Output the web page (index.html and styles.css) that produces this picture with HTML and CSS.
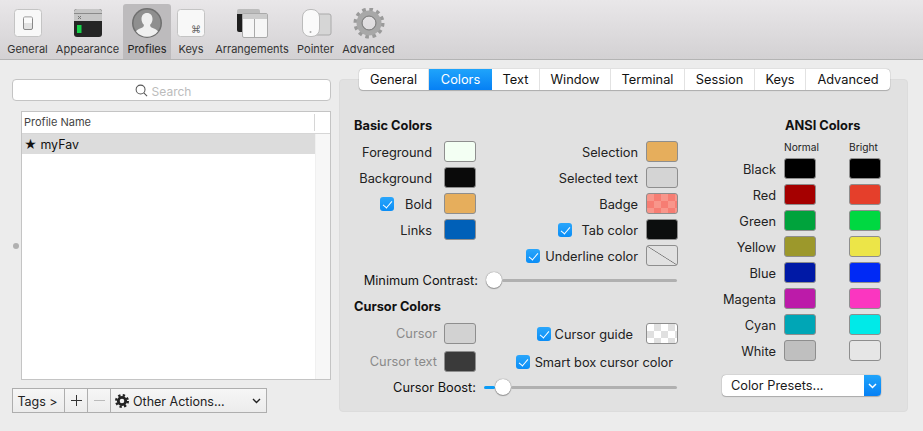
FILE: index.html
```html
<!DOCTYPE html>
<html lang="en">

<head>
    <meta charset="UTF-8">
    <meta name="viewport" content="width=device-width, initial-scale=1.0">
    <title>Preferences</title>
    <link rel="stylesheet" href="styles.css">
</head>

<body>

    <div class="toolbar">
        <div class="tool">
            <svg class="tool-icon" viewBox="0 0 32 32">
                <rect x="2.5" y="1.5" width="27" height="27" rx="3" fill="#f8f8f8" stroke="#c4c4c4"/>
                <rect x="11.5" y="9" width="9" height="12.5" rx="1.5" fill="#e2e2e2" stroke="#888"/>
                <rect x="12" y="9.5" width="8" height="5.5" fill="#fafafa"/>
            </svg>
            <span>General</span>
        </div>
        <div class="tool">
            <svg class="tool-icon" viewBox="0 0 32 32">
                <rect x="2" y="1" width="28" height="28" rx="3" fill="#252525"/>
                <path d="M2 13V4a3 3 0 0 1 3-3h22a3 3 0 0 1 3 3v9z" fill="#c6c6c6"/>
                <rect x="2" y="5" width="28" height="1" fill="#8a8a8a"/>
                <path d="M6 8l3 3M9 8l-3 3" stroke="#777" fill="none"/>
                <rect x="5" y="17" width="4.5" height="8" fill="#17d14a"/>
            </svg>
            <span>Appearance</span>
        </div>
        <div class="tool tool-active">
            <svg class="tool-icon" viewBox="0 0 32 32">
                <circle cx="16" cy="15" r="15" fill="#6f6f6f"/>
                <circle cx="16" cy="15" r="13.5" fill="#8f8f8f"/>
                <path d="M16 5c-3.5 0-5.5 2.6-5.5 6 0 2.4 1 4.5 2.4 5.800 0 1.500-.4 2.300-2 3-2.600 1.100-4.800 1.900-5.900 3.400a13.500 13.500 0 0 0 22 0c-1.100-1.500-3.300-2.300-5.900-3.400-1.600-.7-2-1.500-2-3 1.400-1.300 2.400-3.400 2.400-5.800 0-3.400-2-6-5.500-6z" fill="#efefef"/>
            </svg>
            <span>Profiles</span>
        </div>
        <div class="tool">
            <svg class="tool-icon" viewBox="0 0 32 32">
                <rect x="2.5" y="1.5" width="27" height="27" rx="3" fill="#f8f8f8" stroke="#c4c4c4"/>
                <text class="cmd-glyph" x="21" y="25" text-anchor="middle">⌘</text>
            </svg>
            <span>Keys</span>
        </div>
        <div class="tool">
            <svg class="tool-icon" viewBox="0 0 32 32">
                <path d="M1 3a2 2 0 0 1 2-2h19a2 2 0 0 1 2 2v4H1z" fill="#bcbcbc"/>
                <path d="M1 6h8v18H3a2 2 0 0 1-2-2z" fill="#1e1e1e"/>
                <rect x="6.5" y="5.5" width="25" height="24" rx="1.5" fill="#f6f6f6" stroke="#aaa"/>
                <rect x="7" y="6" width="24" height="5" fill="#cccccc"/>
                <path d="M18.5 11v18" stroke="#aaa"/>
            </svg>
            <span>Arrangements</span>
        </div>
        <div class="tool">
            <svg class="tool-icon" viewBox="0 0 32 32">
                <rect x="15" y="6" width="16" height="21" rx="2" fill="#d6d6d6" stroke="#aaa"/>
                <rect x="2.5" y="1.5" width="17" height="27" rx="7.5" fill="#fafafa" stroke="#bbb"/>
                <circle cx="10.5" cy="24" r="1" fill="#aaa"/>
            </svg>
            <span>Pointer</span>
        </div>
        <div class="tool tool-last">
            <svg class="tool-icon" viewBox="0 0 32 32">
                <circle cx="16" cy="15" r="13.5" fill="none" stroke="#9a9a9a" stroke-width="4" stroke-dasharray="3.53 3.53"/>
                <circle cx="16" cy="15" r="9.5" fill="none" stroke="#a8a8a8" stroke-width="6"/>
                <circle cx="16" cy="15" r="7" fill="none" stroke="#7c7c7c"/>
            </svg>
            <span>Advanced</span>
        </div>
    </div>

    <div class="main">

        <div class="profiles">
            <div class="search">
                <svg class="search-icon" viewBox="0 0 14 14">
                    <circle cx="6" cy="6" r="4.8" fill="none" stroke="#555" stroke-width="1.1"/>
                    <path d="M9.5 9.5l3.5 3.5" stroke="#555" stroke-width="1.2"/>
                </svg>
                <span class="search-text">Search</span>
            </div>

            <div class="list-row">
                <div class="split-handle"></div>
                <div class="list">
                    <div class="list-head">
                        <span class="list-head-name">Profile Name</span>
                        <span class="list-head-end"></span>
                    </div>
                    <div class="list-body">
                        <div class="list-rows">
                            <div class="list-item">★ myFav</div>
                        </div>
                        <div class="list-gutter"></div>
                    </div>
                </div>
            </div>

            <div class="actions">
                <div class="action action-tags">Tags &gt;</div>
                <div class="action action-sign">
                    <svg width="11" height="11" viewBox="0 0 11 11"><path d="M5.5 0v11M0 5.5h11" stroke="#333"/></svg>
                </div>
                <div class="action action-sign">
                    <svg width="11" height="11" viewBox="0 0 11 11"><path d="M0 5.5h11" stroke="#bbb"/></svg>
                </div>
                <div class="action action-other">
                    <svg width="14" height="14" viewBox="0 0 14 14">
                        <circle cx="7" cy="7" r="5.8" fill="none" stroke="#222" stroke-width="2.4" stroke-dasharray="2.28 2.28"/>
                        <circle cx="7" cy="7" r="3.7" fill="none" stroke="#222" stroke-width="2.8"/>
                    </svg>
                    <span class="action-label">Other Actions...</span>
                    <svg width="9" height="6" viewBox="0 0 9 6"><path d="M1 1l3.5 3.5L8 1" fill="none" stroke="#222" stroke-width="1.4"/></svg>
                </div>
            </div>
        </div>

        <div class="panel">
            <div class="tabs">
                <div class="tab">General</div>
                <div class="tab tab-active">Colors</div>
                <div class="tab">Text</div>
                <div class="tab">Window</div>
                <div class="tab">Terminal</div>
                <div class="tab">Session</div>
                <div class="tab">Keys</div>
                <div class="tab">Advanced</div>
            </div>

            <div class="panel-body">
                <div class="basic">
                    <h3 class="heading">Basic Colors</h3>
                    <div class="pairs">
                        <div class="pair"><span>Foreground</span><i class="swatch c-foreground"></i></div>
                        <div class="pair pair-right"><span>Selection</span><i class="swatch c-gold"></i></div>
                        <div class="pair"><span>Background</span><i class="swatch c-background"></i></div>
                        <div class="pair pair-right"><span>Selected text</span><i class="swatch c-seltext"></i></div>
                        <div class="pair">
                            <b class="check check-bold"></b><span>Bold</span><i class="swatch c-gold"></i>
                        </div>
                        <div class="pair pair-right"><span>Badge</span><i class="swatch c-badge"></i></div>
                        <div class="pair"><span>Links</span><i class="swatch c-links"></i></div>
                        <div class="pair pair-right">
                            <b class="check check-tab"></b><span>Tab color</span><i class="swatch c-tab"></i>
                        </div>
                        <div class="pair"></div>
                        <div class="pair pair-right">
                            <b class="check check-near"></b><span>Underline color</span><i class="swatch c-none"></i>
                        </div>
                    </div>

                    <div class="slider-row slider-contrast">
                        <span class="slider-label">Minimum Contrast:</span>
                        <div class="slider"><div class="thumb"></div><div class="track"></div></div>
                    </div>

                    <h3 class="heading heading-cursor">Cursor Colors</h3>
                    <div class="pairs pairs-cursor">
                        <div class="pair pair-dim"><span>Cursor</span><i class="swatch c-cursor"></i></div>
                        <div class="pair pair-right pair-guide">
                            <b class="check check-guide"></b><span>Cursor guide</span><i class="swatch c-guide"></i>
                        </div>
                        <div class="pair pair-dim"><span>Cursor text</span><i class="swatch c-cursortext"></i></div>
                        <div class="pair pair-right pair-smart">
                            <b class="check check-near"></b><span>Smart box cursor color</span>
                        </div>
                    </div>

                    <div class="slider-row slider-boost">
                        <span class="slider-label">Cursor Boost:</span>
                        <div class="slider">
                            <div class="track track-on"></div><div class="thumb"></div><div class="track"></div>
                        </div>
                    </div>
                </div>

                <div class="ansi">
                    <h3 class="heading ansi-heading">ANSI Colors</h3>
                    <div class="ansi-grid">
                        <span></span><small>Normal</small><small>Bright</small>
                        <span>Black</span><i class="swatch a-black"></i><i class="swatch a-black"></i>
                        <span>Red</span><i class="swatch a-red"></i><i class="swatch a-red2"></i>
                        <span>Green</span><i class="swatch a-green"></i><i class="swatch a-green2"></i>
                        <span>Yellow</span><i class="swatch a-yellow"></i><i class="swatch a-yellow2"></i>
                        <span>Blue</span><i class="swatch a-blue"></i><i class="swatch a-blue2"></i>
                        <span>Magenta</span><i class="swatch a-magenta"></i><i class="swatch a-magenta2"></i>
                        <span>Cyan</span><i class="swatch a-cyan"></i><i class="swatch a-cyan2"></i>
                        <span>White</span><i class="swatch a-white"></i><i class="swatch a-white2"></i>
                    </div>
                    <div class="presets">
                        <span class="presets-label">Color Presets...</span>
                        <span class="presets-arrow">
                            <svg width="9" height="6" viewBox="0 0 9 6"><path d="M1 1l3.5 3.5L8 1" fill="none" stroke="#fff" stroke-width="1.5"/></svg>
                        </span>
                    </div>
                </div>
            </div>
        </div>

    </div>

</body>

</html>
```
FILE: styles.css
```css
* {
    box-sizing: border-box;
}

body {
    font-family: 'Inter', 'Liberation Sans', sans-serif;
    font-size: 12.8px;
    color: #1a1a1a;
    background-color: #ececec;
    margin: 0;
    padding: 0;
    height: 431px;
    overflow: hidden;
}

/* toolbar */
.toolbar {
    display: grid;
    grid-template-columns: 49px 71px 48px 40px 82px 45px 59px;
    height: 60px;
    padding: 4px 0 0 3px;
    background: linear-gradient(#e9e7e9, #d3d1d3);
    border-bottom: 1px solid #b4b4b4;
}

.tool {
    display: flex;
    flex-direction: column;
    align-items: center;
    padding-top: 4px;
    font-size: 11px;
    color: #333;
    white-space: nowrap;
}

.tool-active {
    background-color: #bdbbbd;
    border-radius: 3px 3px 0 0;
    color: #222;
}

.tool-last {
    padding-left: 2px;
}

.tool-icon {
    width: 32px;
    height: 32px;
    margin-bottom: 2px;
}

.cmd-glyph {
    font-family: 'DejaVu Sans', sans-serif;
    font-size: 10px;
    fill: #666;
}

/* main area */
.main {
    display: flex;
    gap: 8px;
    padding: 19px 0 0 12px;
}

.profiles {
    width: 319px;
}

.search {
    display: flex;
    align-items: center;
    justify-content: center;
    gap: 4px;
    height: 22px;
    padding-right: 17px;
    background-color: #fff;
    border: 1px solid #c4c4c4;
    border-radius: 4px;
    font-size: 12px;
    color: #bcbcbc;
}

.search-icon {
    width: 13px;
    height: 13px;
}

.search-text {
    padding-top: 2px;
}

.list-row {
    display: flex;
    align-items: center;
    margin-top: 10px;
}

.split-handle {
    width: 6px;
    height: 6px;
    margin: 0 2px 0 1px;
    background-color: #b0b0b0;
    border-radius: 50%;
}

.list {
    flex: 1;
    height: 269px;
    display: flex;
    flex-direction: column;
    background-color: #fff;
    border: 1px solid #c4c4c4;
}

.list-head {
    display: flex;
    height: 22px;
    flex-shrink: 0;
    border-bottom: 1px solid #d6d6d6;
    font-size: 11px;
    color: #444;
}

.list-head-name {
    flex: 1;
    padding: 2px 0 0 2px;
    line-height: 17px;
}

.list-head-end {
    width: 16px;
    margin: 2px 0;
    border-left: 1px solid #d6d6d6;
}

.list-body {
    flex: 1;
    display: flex;
}

.list-rows {
    flex: 1;
}

.list-gutter {
    width: 15px;
    background-color: #f7f7f7;
    border-left: 1px solid #f0f0f0;
}

.list-item {
    height: 20px;
    padding-left: 2px;
    line-height: 22px;
    font-size: 12.4px;
    background-color: #dcdcdc;
    color: #111;
}

.actions {
    display: flex;
    width: 255px;
    height: 25px;
    margin-top: 8px;
    background: linear-gradient(#f6f6f6, #ececec);
    border: 1px solid #aeaeae;
    font-size: 12.5px;
}

.action {
    display: flex;
    align-items: center;
    justify-content: center;
    border-right: 1px solid #aeaeae;
    color: #222;
}

.action-tags {
    width: 52px;
    padding: 2px 2px 0 0;
}

.action-sign {
    width: 23px;
}

.action-other {
    flex: 1;
    justify-content: flex-start;
    gap: 4px;
    padding: 0 5px 0 4px;
    border-right: 0;
}

.action-label {
    flex: 1;
    padding-top: 2px;
    white-space: nowrap;
}

/* colors panel */
.panel {
    width: 569px;
    height: 333px;
    background-color: #e1e1e1;
    border: 1px solid #dcdcdc;
    border-radius: 4px;
}

.tabs {
    display: grid;
    grid-template-columns: 70px 63px 48px 71px 74px 70px 51px 84px;
    width: 531px;
    height: 21px;
    margin: -11px 0 0 19px;
    background-color: #fff;
    border-radius: 4px;
    box-shadow: 0 0 1px rgba(0, 0, 0, 0.45), 0 1px 1px rgba(0, 0, 0, 0.2);
    overflow: hidden;
}

.tab {
    text-align: center;
    line-height: 21px;
    color: #111;
    border-right: 1px solid #e2e2e2;
}

.tab:last-child {
    border-right: 0;
}

.tab-active {
    color: #fff;
    border-right: 0;
    background: linear-gradient(#1fa4fb, #0680f4);
}

.panel-body {
    display: flex;
    padding: 25px 26px 0 14px;
}

.heading {
    margin: 0;
    height: 20px;
    line-height: 22px;
    font-size: 12.8px;
    font-weight: 700;
    color: #111;
}

.basic {
    width: 324px;
}

.pairs {
    display: grid;
    grid-template-columns: 122px 202px;
    row-gap: 5px;
    margin-top: 6px;
}

.pair {
    display: flex;
    align-items: center;
    justify-content: flex-end;
    height: 21px;
    gap: 12px;
    white-space: nowrap;
    color: #222;
}

.pair span {
    padding-top: 2px;
}

.pair-right {
    gap: 8px;
}

.pair-dim {
    gap: 7px;
    color: #8a8a8a;
}

.pair-dim span {
    padding-top: 0;
}

.pair-guide {
    gap: 13px;
}

.pair-smart {
    padding-right: 5px;
}

.pairs-cursor {
    row-gap: 7px;
    margin-top: 7px;
}

.swatch {
    display: block;
    width: 32px;
    height: 21px;
    border: 1px solid #8e8e8e;
    border-radius: 3px;
    flex-shrink: 0;
}

.check {
    position: relative;
    display: block;
    width: 14px;
    height: 14px;
    background: linear-gradient(#2aa6fb, #0a8df6);
    border-radius: 3px;
    flex-shrink: 0;
}

.check::after {
    content: "";
    position: absolute;
    left: 5px;
    top: 2px;
    width: 4px;
    height: 8px;
    border: solid #fff;
    border-width: 0 1.6px 1.6px 0;
    transform: rotate(40deg);
}

.check-bold {
    margin-right: -1px;
}

.check-tab {
    margin-right: 1px;
}

.check-near {
    margin-right: -3px;
}

.check-guide {
    margin-right: -9px;
}

.c-foreground { background-color: #f3fff3; }
.c-background { background-color: #0a0a0a; }
.c-gold { background-color: #e6ae5c; }
.c-links { background-color: #0060b8; }
.c-seltext { background-color: #d4d4d4; }
.c-tab { background-color: #0c0e0e; }
.c-cursor { background-color: #d2d2d2; }
.c-cursortext { background-color: #3a3a3a; }

.c-badge {
    background-color: #f8968b;
    background-image: conic-gradient(#f67d73 25%, transparent 0 50%, #f67d73 0 75%, transparent 0);
    background-size: 14px 14px;
}

.c-guide {
    background-color: #fff;
    background-image: conic-gradient(#e0e0e0 25%, transparent 0 50%, #e0e0e0 0 75%, transparent 0);
    background-size: 14px 14px;
}

.c-none {
    background: linear-gradient(to bottom left, transparent calc(50% - 0.7px), #777 50%, transparent calc(50% + 0.7px));
}

.slider-row {
    display: flex;
    align-items: center;
    justify-content: flex-end;
    height: 16px;
    padding-right: 1px;
    color: #111;
}

.slider-contrast {
    margin-top: 6px;
}

.slider-boost {
    margin-top: 7px;
}

.slider-label {
    padding-top: 1px;
    white-space: nowrap;
}

.slider {
    display: flex;
    align-items: center;
    margin-left: 8px;
    width: 193px;
    height: 16px;
}

.slider-contrast .slider {
    width: 191px;
}

.track {
    flex: 1;
    height: 3px;
    background-color: #b0b0b0;
    border-radius: 2px;
}

.track-on {
    flex: 0 0 11px;
    background-color: #0a9bf6;
}

.thumb {
    width: 16px;
    height: 16px;
    background-color: #fff;
    border-radius: 50%;
    box-shadow: 0 0 1px rgba(0, 0, 0, 0.6), 0 1px 1px rgba(0, 0, 0, 0.3);
    flex-shrink: 0;
}

.heading-cursor {
    margin-top: 8px;
}

/* ansi */
.ansi {
    flex: 1;
    display: flex;
    flex-direction: column;
    align-items: flex-end;
}

.ansi-heading {
    align-self: flex-start;
    margin-left: 107px;
    white-space: nowrap;
}

.ansi-grid {
    display: grid;
    grid-template-columns: 62px 65px 32px;
    grid-template-rows: 14px;
    grid-auto-rows: 21px;
    row-gap: 5px;
    align-items: center;
    margin-top: 4px;
    color: #222;
}

.ansi-grid span {
    width: 54px;
    padding-top: 2px;
    text-align: right;
}

.ansi-grid small {
    padding-top: 1px;
    font-size: 10.2px;
    white-space: nowrap;
}

.a-black { background-color: #000; }
.a-red { background-color: #a50000; }
.a-red2 { background-color: #e53f2b; }
.a-green { background-color: #00a33c; }
.a-green2 { background-color: #00d841; }
.a-yellow { background-color: #9c982b; }
.a-yellow2 { background-color: #ece548; }
.a-blue { background-color: #0019a6; }
.a-blue2 { background-color: #0029f5; }
.a-magenta { background-color: #bc1ba9; }
.a-magenta2 { background-color: #fb36c0; }
.a-cyan { background-color: #00a6b6; }
.a-cyan2 { background-color: #00eae8; }
.a-white { background-color: #bfbfbf; }
.a-white2 { background-color: #e6e6e6; }

.presets {
    display: flex;
    width: 159px;
    height: 21px;
    margin-top: 14px;
    background-color: #fff;
    border-radius: 4px;
    box-shadow: 0 0 1px rgba(0, 0, 0, 0.5), 0 1px 1px rgba(0, 0, 0, 0.2);
    overflow: hidden;
}

.presets-label {
    flex: 1;
    padding-left: 9px;
    line-height: 21px;
}

.presets-arrow {
    display: flex;
    align-items: center;
    justify-content: center;
    width: 17px;
    background: linear-gradient(#1fa4fb, #0680f4);
}
```
